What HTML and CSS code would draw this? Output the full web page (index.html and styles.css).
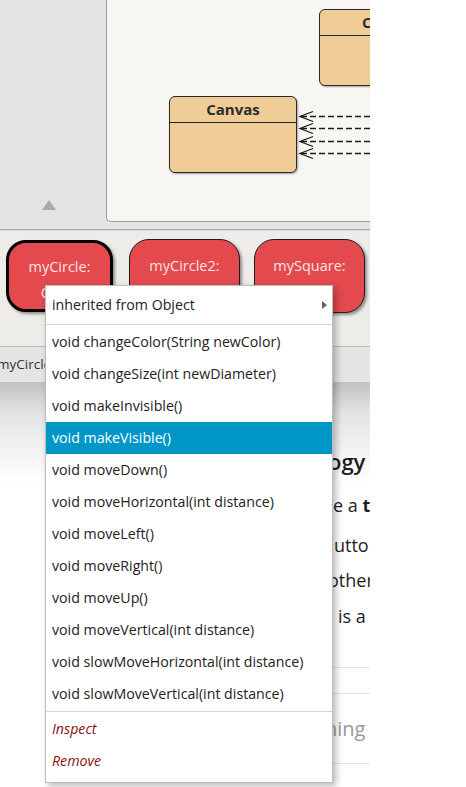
FILE: index.html
```html
<!DOCTYPE html>
<html>
<head>
<meta charset="utf-8">
<link rel="stylesheet" href="styles.css">
</head>
<body>
<div class="shot">
  <div class="top">
    <div class="gutter"><span class="tri"></span></div>
    <div class="canvas-wrap">
      <div class="canvas">
        <div class="cls cls-canvas"><div class="cls-name">Canvas</div></div>
        <div class="cls cls-circle"><div class="cls-name">Circle</div></div>
        <svg class="arrows" width="263" height="221" viewBox="0 0 263 221">
          <g fill="none" stroke="#1c1c1c" stroke-width="1.3">
            <line x1="194" y1="116.5" x2="263" y2="116.5" stroke-dasharray="6 3"/>
            <polyline points="206,111.5 193,116.5 206,121.5"/>
            <line x1="194" y1="128.5" x2="263" y2="128.5" stroke-dasharray="6 3"/>
            <polyline points="206,123.5 193,128.5 206,133.5"/>
            <line x1="194" y1="141.5" x2="263" y2="141.5" stroke-dasharray="6 3"/>
            <polyline points="206,136.5 193,141.5 206,146.5"/>
            <line x1="194" y1="153.5" x2="263" y2="153.5" stroke-dasharray="6 3"/>
            <polyline points="206,148.5 193,153.5 206,158.5"/>
          </g>
        </svg>
      </div>
    </div>
  </div>
  <div class="sep"></div>
  <div class="bench">
    <div class="obj obj-sel">myCircle:<br>Circle</div>
    <div class="obj obj-2">myCircle2:<br>Circle</div>
    <div class="obj obj-3">mySquare:<br>Square</div>
  </div>
  <div class="status">myCircle : Circle</div>
  <div class="doc">
    <div class="doc-h">ogy</div>
    <div class="doc-p p1">e a <b>t</b></div>
    <div class="doc-p p2">utto</div>
    <div class="doc-p p3">other</div>
    <div class="doc-p p4">is a</div>
    <div class="rule r1"></div>
    <div class="rule r2"></div>
    <div class="doc-muted">hing</div>
    <div class="rule r3"></div>
  </div>

  <div class="menu">
    <div class="mi mi-sub">inherited from Object<span class="sub-arrow"></span></div>
    <div class="msep"></div>
    <div class="mi">void changeColor(String newColor)</div>
    <div class="mi">void changeSize(int newDiameter)</div>
    <div class="mi">void makeInvisible()</div>
    <div class="mi mi-hl">void makeVisible()</div>
    <div class="mi">void moveDown()</div>
    <div class="mi">void moveHorizontal(int distance)</div>
    <div class="mi">void moveLeft()</div>
    <div class="mi">void moveRight()</div>
    <div class="mi">void moveUp()</div>
    <div class="mi">void moveVertical(int distance)</div>
    <div class="mi">void slowMoveHorizontal(int distance)</div>
    <div class="mi">void slowMoveVertical(int distance)</div>
    <div class="msep"></div>
    <div class="mi mi-act">Inspect</div>
    <div class="mi mi-act">Remove</div>
  </div>
</div>
</body>
</html>
```
FILE: styles.css
```css
* { box-sizing: border-box; }
body { margin: 0; background: #fff; font-family: "Open Sans", "Noto Sans", sans-serif; }

.shot { width: 370px; height: 787px; overflow: hidden; position: relative; background: #fff; }

.top { display: flex; height: 229px; background: #e4e4e4; }
.gutter { width: 106px; flex: none; display: flex; align-items: flex-end; padding-left: 42px; padding-bottom: 19px; }
.tri { width: 0; height: 0; border-left: 7.5px solid transparent; border-right: 7.5px solid transparent; border-bottom: 10px solid #a9a9a9; }
.canvas-wrap { flex: 1; padding-bottom: 7px; }
.canvas { height: 100%; width: 300px; background: #f7f6f2; border-left: 1px solid #9b9b9b; border-bottom: 1px solid #9b9b9b; border-bottom-left-radius: 5px; position: relative; overflow: hidden; }

.cls { position: absolute; width: 128px; height: 77px; background: #f0cc96; border: 1.5px solid #2a2a2a; border-radius: 6px; box-shadow: 1px 1px 2px rgba(0,0,0,.35); }
.cls-canvas { left: 62px; top: 96px; }
.cls-circle { left: 212px; top: 9px; height: 77px; }
.cls-name { height: 26px; border-bottom: 1.5px solid #222; text-align: center; font-weight: 700; font-size: 15px; line-height: 24px; color: #2c2c2c; }
.arrows { position: absolute; left: 0; top: 0; }

.sep { height: 2px; border-top: 1px solid #a9a9a9; background: #d8d8d8; }

.bench { height: 116px; background: #edece8; display: flex; align-items: flex-start; padding: 8px 0 0 6px; border-bottom: 1px solid #bcbcbc; }
.obj { flex: none; width: 111px; height: 74px; background: #e4494d; border: 1px solid #1e1e1e; border-radius: 20px; color: #fbe3e3; font-size: 14.5px; line-height: 26px; text-align: center; padding-top: 13px; box-shadow: 2px 2px 3px rgba(0,0,0,.4); overflow: hidden; white-space: nowrap; }
.obj-sel { width: 107px; height: 72px; border: 3px solid #000; margin-top: 1px; padding-top: 11px; }
.obj-2 { margin-left: 16px; }
.obj-3 { margin-left: 14px; }

.status { height: 36px; background: #e4e4e4; border-bottom: 1px solid #c4c4c4; font-size: 13.5px; line-height: 34px; color: #333; text-indent: -3px; white-space: nowrap; }

.doc { height: 403px; background: linear-gradient(#c2c2c2 0, #e4e4e4 30px, #fff 100px); display: flex; flex-direction: column; color: #1e1e1e; white-space: nowrap; }
.doc-h { font-size: 22px; font-weight: 600; line-height: 26px; margin-top: 65px; padding-left: 328px; }
.doc-p { font-size: 18px; line-height: 24px; }
.doc-p b { font-weight: 700; }
.p1 { margin-top: 19px; padding-left: 333px; }
.p2 { margin-top: 16px; padding-left: 334px; }
.p3 { margin-top: 11px; padding-left: 328px; }
.p4 { margin-top: 12px; padding-left: 338px; }
.rule { height: 1px; background: #e2e2e2; margin-left: 330px; }
.r1 { margin-top: 39px; }
.r2 { margin-top: 25px; }
.doc-muted { font-size: 20px; line-height: 28px; color: #9a9a9a; margin-top: 21px; padding-left: 325px; }
.r3 { margin-top: 20px; }

.menu { position: absolute; left: 45px; top: 285px; width: 288px; height: 498px; background: #fff; border: 1px solid #bdbdbd; box-shadow: 3px 3px 7px rgba(0,0,0,.28); font-size: 14.2px; color: #222; }
.mi { height: 32px; line-height: 32px; padding-left: 6px; white-space: nowrap; position: relative; }
.mi-sub { height: 37px; line-height: 38px; }
.sub-arrow { position: absolute; right: 5px; top: 15px; width: 0; height: 0; border-top: 4.5px solid transparent; border-bottom: 4.5px solid transparent; border-left: 5px solid #666; }
.msep { height: 3px; border-top: 1px solid #fff; border-bottom: 1px solid #fff; background: #d6d6d6; background-clip: content-box; }
.mi-hl { background: #0096c7; color: #fff; }
.mi-act { font-style: italic; color: #8a1212; }
```
